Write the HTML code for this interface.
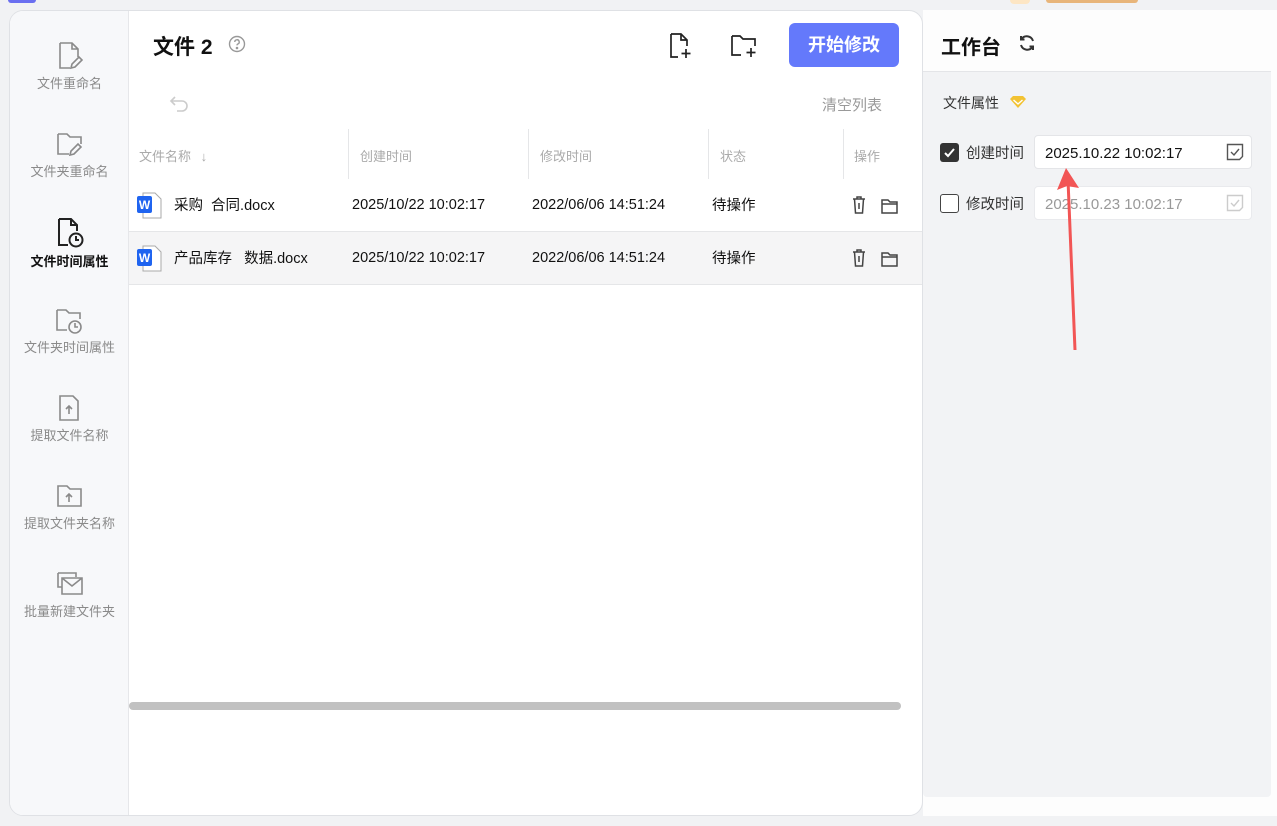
<!DOCTYPE html>
<html><head><meta charset="utf-8"><style>
*{box-sizing:border-box;margin:0;padding:0}
body{width:1277px;height:826px;background:#f1f2f4;font-family:"Liberation Sans","Noto Sans CJK SC",sans-serif;position:relative;overflow:hidden;color:#222}
.abs{position:absolute}
.card{left:9px;top:10px;width:914px;height:806px;background:#fff;border:1px solid #dfe1e5;border-radius:14px;overflow:hidden}
.side{left:0;top:0;width:119px;height:100%;background:#f7f8fa;border-right:1px solid #e6e7ea}
.nav{position:absolute;left:0;width:119px;text-align:center;font-size:13px;color:#8a8a8a}
.nav svg{display:block;margin:0 auto 2px}
.nav.on{color:#111;font-weight:bold}
.th{position:absolute;top:135px;font-size:13px;color:#aaa}
.sep{position:absolute;top:118px;width:1px;height:50px;background:#e5e6e8}
.row{position:absolute;left:119px;width:794px;height:53px;font-size:14.5px;color:#111}
.row span{position:absolute;top:16px}
</style></head><body>
<div class="abs" style="left:8px;top:0;width:28px;height:3px;background:#6a6ff0;border-radius:0 0 4px 4px"></div>
<div class="abs" style="left:1010px;top:0;width:20px;height:4px;background:#fde6c4;border-radius:0 0 10px 10px"></div>
<div class="abs" style="left:1046px;top:0;width:92px;height:3px;background:#e8b57a;border-radius:0 0 10px 10px"></div>

<div class="abs card">
 <div class="abs side">
  <div class="nav" style="top:30px"><svg width="26" height="30" viewBox="0 0 26 30" fill="none" stroke="#8a8a8a" stroke-width="1.6"><path d="M3 2h12l6 6v8M3 2v25h10M15 2v6h6"/><path d="M14 27l1-4 7-7 3 3-7 7z"/></svg>文件重命名</div>
  <div class="nav" style="top:118px"><svg width="28" height="30" viewBox="0 0 28 30" fill="none" stroke="#8a8a8a" stroke-width="1.6"><path d="M2 5h9l3 3h11v7M2 5v20h11"/><path d="M14 26l1-4 7-7 3 3-7 7z"/></svg>文件夹重命名</div>
  <div class="nav on" style="top:206px"><svg width="28" height="32" viewBox="0 0 28 32" fill="none" stroke="#222" stroke-width="2"><path d="M3 2h12l6 6v6M3 2v26h9M15 2v6h6"/><circle cx="20" cy="23" r="6.5"/><path d="M20 19v4h3"/></svg>文件时间属性</div>
  <div class="nav" style="top:294px"><svg width="30" height="30" viewBox="0 0 30 30" fill="none" stroke="#8a8a8a" stroke-width="1.6"><path d="M2 5h9l3 3h11v6M2 5v20h10"/><circle cx="20" cy="22" r="6"/><path d="M20 18v4h3"/></svg>文件夹时间属性</div>
  <div class="nav" style="top:382px"><svg width="26" height="30" viewBox="0 0 26 30" fill="none" stroke="#8a8a8a" stroke-width="1.6"><path d="M3 3h13l5 5v19H3z"/><path d="M12 21v-8M9 16l3-3 3 3"/></svg>提取文件名称</div>
  <div class="nav" style="top:470px"><svg width="28" height="30" viewBox="0 0 28 30" fill="none" stroke="#8a8a8a" stroke-width="1.6"><path d="M2 5h9l3 3h11v17H2z"/><path d="M13 21v-8M10 16l3-3 3 3"/></svg>提取文件夹名称</div>
  <div class="nav" style="top:558px"><svg width="30" height="30" viewBox="0 0 30 30" fill="none" stroke="#8a8a8a" stroke-width="1.6"><path d="M3 4h18v4M3 4v14h4"/><path d="M7 9h20v16H7zM7 9l10 8 10-8"/></svg>批量新建文件夹</div>
 </div>
 <div class="abs" style="left:143px;top:20px;font-size:21px;font-weight:bold;color:#111">文件 2</div>
 <svg class="abs" style="left:218px;top:24px" width="18" height="18" viewBox="0 0 18 18" fill="none" stroke="#999" stroke-width="1.4"><circle cx="9" cy="9" r="7.5"/><path d="M6.8 7a2.2 2.2 0 1 1 3 2c-.6.3-.8.7-.8 1.4"/><circle cx="9" cy="13" r=".6" fill="#999"/></svg>
 <svg class="abs" style="left:658px;top:21px" width="26" height="28" viewBox="0 0 26 28" fill="none" stroke="#222" stroke-width="1.7"><path d="M3 2h10l6 6v6M3 2v23h7M13 2v6h6"/><path d="M18 17v9M13.5 21.5h9"/></svg>
 <svg class="abs" style="left:720px;top:21px" width="30" height="28" viewBox="0 0 30 28" fill="none" stroke="#222" stroke-width="1.7"><path d="M2 4h8l3 3h12v7M2 4v19h9"/><path d="M21 16v9M16.5 20.5h9"/></svg>
 <div class="abs" style="left:779px;top:12px;width:110px;height:44px;background:#6479fb;border-radius:6px;color:#fff;font-size:18px;font-weight:bold;text-align:center;line-height:44px">开始修改</div>
 <svg class="abs" style="left:159px;top:83px" width="22" height="20" viewBox="0 0 22 20" fill="none" stroke="#ccc" stroke-width="1.6"><path d="M6 3L2 7l4 4M2 7h11a5 5 0 0 1 0 10H8"/></svg>
 <div class="abs" style="left:812px;top:83px;font-size:15px;color:#999">清空列表</div>
 <div class="th" style="left:129px">文件名称 <span style="margin-left:6px">↓</span></div>
 <div class="sep" style="left:338px"></div><div class="th" style="left:350px">创建时间</div>
 <div class="sep" style="left:518px"></div><div class="th" style="left:530px">修改时间</div>
 <div class="sep" style="left:698px"></div><div class="th" style="left:710px">状态</div>
 <div class="sep" style="left:833px"></div><div class="th" style="left:844px">操作</div>

 <div class="row" style="top:168px;border-bottom:1px solid #e5e6e8">
  <svg class="abs" style="left:8px;top:13px" width="26" height="28" viewBox="0 0 26 28"><path d="M6 1h12l6 6v19H6z" fill="#fff" stroke="#aaa"/><rect x="0" y="4" width="15" height="17" rx="2" fill="#1f64f0"/><text x="7.5" y="17" font-size="12" font-weight="bold" fill="#fff" text-anchor="middle" font-family="Liberation Sans">W</text></svg>
  <span style="left:45px;top:15px">采购&nbsp; 合同.docx</span><span style="left:223px;top:18px">2025/10/22 10:02:17</span><span style="left:403px;top:18px">2022/06/06 14:51:24</span><span style="left:583px;top:15px">待操作</span>
 </div>
 <div class="row" style="top:221px;background:#f5f5f6;border-bottom:1px solid #e5e6e8">
  <svg class="abs" style="left:8px;top:13px" width="26" height="28" viewBox="0 0 26 28"><path d="M6 1h12l6 6v19H6z" fill="#fff" stroke="#aaa"/><rect x="0" y="4" width="15" height="17" rx="2" fill="#1f64f0"/><text x="7.5" y="17" font-size="12" font-weight="bold" fill="#fff" text-anchor="middle" font-family="Liberation Sans">W</text></svg>
  <span style="left:45px;top:15px">产品库存&nbsp;&nbsp; 数据.docx</span><span style="left:223px;top:18px">2025/10/22 10:02:17</span><span style="left:403px;top:18px">2022/06/06 14:51:24</span><span style="left:583px;top:15px">待操作</span>
 </div>
 <svg class="abs" style="left:840px;top:184px" width="52" height="90" viewBox="0 0 52 90" fill="none" stroke="#444" stroke-width="1.5">
  <g><path d="M3 4h12M7 4V2h4v2M4.5 4l1 14h7l1-14M9 8v6"/><path d="M32 5h6l2 2h7v11H32z"/><path d="M32 9h15"/></g>
  <g transform="translate(0,53)"><path d="M3 4h12M7 4V2h4v2M4.5 4l1 14h7l1-14M9 8v6"/><path d="M32 5h6l2 2h7v11H32z"/><path d="M32 9h15"/></g>
 </svg>
 <div class="abs" style="left:119px;top:691px;width:772px;height:8px;background:#c1c1c1;border-radius:4px"></div>
</div>

<div class="abs" style="left:923px;top:10px;width:354px;height:806px;background:#fdfdfd"></div>
<div class="abs" style="left:941px;top:31px;font-size:20px;font-weight:bold;color:#111">工作台</div>
<svg class="abs" style="left:1017px;top:33px" width="20" height="20" viewBox="0 0 20 20" fill="none" stroke="#333" stroke-width="2"><path d="M16 8a6.5 6.5 0 0 0-11.5-2M4 12a6.5 6.5 0 0 0 11.5 2"/><path d="M4 3v3.5h3.5M16 17v-3.5h-3.5"/></svg>
<div class="abs" style="left:923px;top:71px;width:348px;height:726px;background:#f2f3f5;border-top:1px solid #e4e5e8;border-radius:0 0 4px 4px"></div>
<div class="abs" style="left:943px;top:93px;font-size:14px;color:#333">文件属性</div>
<svg class="abs" style="left:1009px;top:95px" width="18" height="14" viewBox="0 0 18 14"><path d="M1 4l3-3h10l3 3-8 9z" fill="#f2c233"/><path d="M4.5 5l4.5 4 4.5-4" stroke="#fff" stroke-width="1.4" fill="none"/></svg>
<div class="abs" style="left:940px;top:143px;width:19px;height:19px;background:#333;border-radius:3px"></div>
<svg class="abs" style="left:940px;top:143px" width="19" height="19"><path d="M5 10l3 3 6-7" stroke="#fff" stroke-width="2" fill="none"/></svg>
<div class="abs" style="left:966px;top:142px;font-size:14.5px;color:#333">创建时间</div>
<div class="abs" style="left:1034px;top:135px;width:218px;height:34px;background:#fff;border:1px solid #e4e5e8;border-radius:4px"></div>
<div class="abs" style="left:1045px;top:145px;font-size:15px;color:#111">2025.10.22 10:02:17</div>
<svg class="abs" style="left:1226px;top:143px" width="18" height="18" fill="none" stroke="#555" stroke-width="1.4"><path d="M1.5 1.5h15v12l-3 3h-12z"/><path d="M5 9l3 3 5-6"/></svg>
<div class="abs" style="left:940px;top:194px;width:19px;height:19px;border:1.5px solid #444;border-radius:3px;background:#fff"></div>
<div class="abs" style="left:966px;top:193px;font-size:14.5px;color:#333">修改时间</div>
<div class="abs" style="left:1034px;top:186px;width:218px;height:34px;background:#fff;border:1px solid #e9eaed;border-radius:4px"></div>
<div class="abs" style="left:1045px;top:196px;font-size:15px;color:#999">2025.10.23 10:02:17</div>
<svg class="abs" style="left:1226px;top:194px" width="18" height="18" fill="none" stroke="#ccc" stroke-width="1.4"><path d="M1.5 1.5h15v12l-3 3h-12z"/><path d="M5 9l3 3 5-6"/></svg>
<svg class="abs" style="left:1050px;top:160px" width="40" height="195" viewBox="0 0 40 195"><path d="M25 190L18 20" stroke="#f25555" stroke-width="3" fill="none"/><path d="M16 8L7 30l10-4 12 2z" fill="#f25555"/></svg>
</body></html>
